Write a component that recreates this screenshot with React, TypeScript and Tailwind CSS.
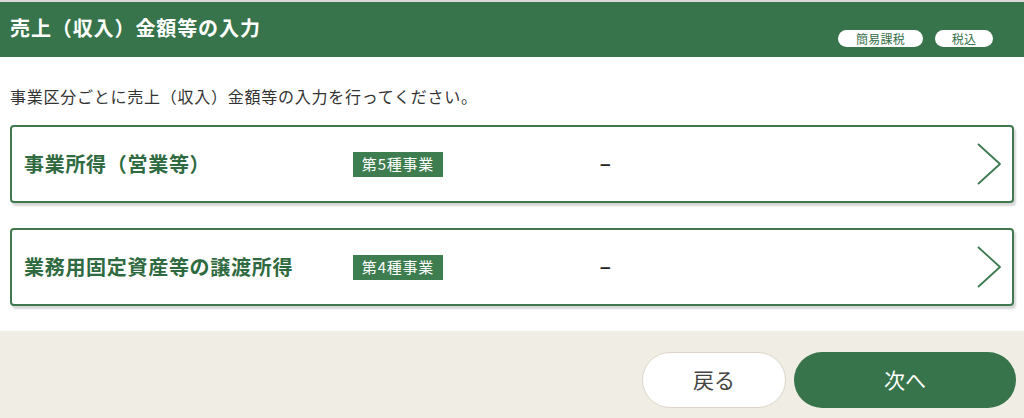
import type { ReactNode } from 'react'

const font = { fontFamily: '"Noto Sans CJK JP", "Noto Sans", sans-serif' }

// 事業区分ごとの入力行
const rows = [
  { title: '事業所得（営業等）', kind: '第5種事業', value: '–' },
  { title: '業務用固定資産等の譲渡所得', kind: '第4種事業', value: '–' },
]

function Pill({ children, className }: { children: ReactNode; className: string }) {
  return (
    <span
      className={`flex h-[17px] items-center justify-center rounded-full bg-white text-[12px] leading-none tracking-[0.3px] text-[#36704a] ${className}`}
    >
      {children}
    </span>
  )
}

function Chevron() {
  return (
    <svg width="26" height="44" viewBox="0 0 26 44" fill="none" className="shrink-0">
      <polyline points="2,2 24,22 2,42" stroke="#3d7a50" strokeWidth="1.8" strokeLinejoin="round" />
    </svg>
  )
}

function Row({ title, kind, value }: { title: string; kind: string; value: string }) {
  return (
    <div className="flex h-[78px] items-center rounded-[4px] border-2 border-[#41794f] bg-white pr-[10px] pl-[12px] shadow-[2px_3px_2px_rgba(0,0,0,0.16)]">
      <div className="w-[329px] shrink-0 text-[20px] font-bold tracking-[0.7px] text-[#2f6a40]">{title}</div>
      <span className="flex h-[25px] w-[90px] shrink-0 items-center justify-center bg-[#3e7d50] text-[15px] tracking-[0.8px] text-white">
        {kind}
      </span>
      <div
        className="flex-1 pl-[157px] text-[19px] font-bold text-[#222]"
        style={{ fontFamily: '"Liberation Sans", sans-serif' }}
      >
        {value}
      </div>
      <Chevron />
    </div>
  )
}

export default function App() {
  return (
    <div className="flex h-[418px] w-[1024px] flex-col overflow-hidden bg-white" style={font}>
      {/* ヘッダー */}
      <div className="border-t-2 border-[#d8d8d8]">
        <div className="flex h-[55px] items-start justify-between bg-[#37744b] pl-[10px] pr-[31px]">
          <h1 className="pt-[13px] text-[20px] font-bold leading-[26px] tracking-[0.9px] text-white">
            売上（収入）金額等の入力
          </h1>
          <div className="flex gap-[12px] pt-[28px]">
            <Pill className="w-[85px]">簡易課税</Pill>
            <Pill className="w-[58px]">税込</Pill>
          </div>
        </div>
      </div>

      {/* 本文 */}
      <div className="flex-1 px-[10px] pt-[27px]">
        <p className="text-[16px] leading-[24px] tracking-[0.75px] text-[#333]">
          事業区分ごとに売上（収入）金額等の入力を行ってください。
        </p>
        <div className="mt-[17px] flex flex-col gap-[25px]">
          {rows.map((r) => (
            <Row key={r.title} {...r} />
          ))}
        </div>
      </div>

      {/* フッター */}
      <div className="flex h-[87px] justify-end gap-[8px] bg-[#f0ede5] pt-[21px] pr-[8px]">
        <button className="h-[56px] w-[144px] rounded-full border border-[#dcd5c8] bg-white text-[21px] text-[#444]">
          戻る
        </button>
        <button className="h-[56px] w-[222px] rounded-full bg-[#37744b] text-[21px] text-white">次へ</button>
      </div>
    </div>
  )
}
